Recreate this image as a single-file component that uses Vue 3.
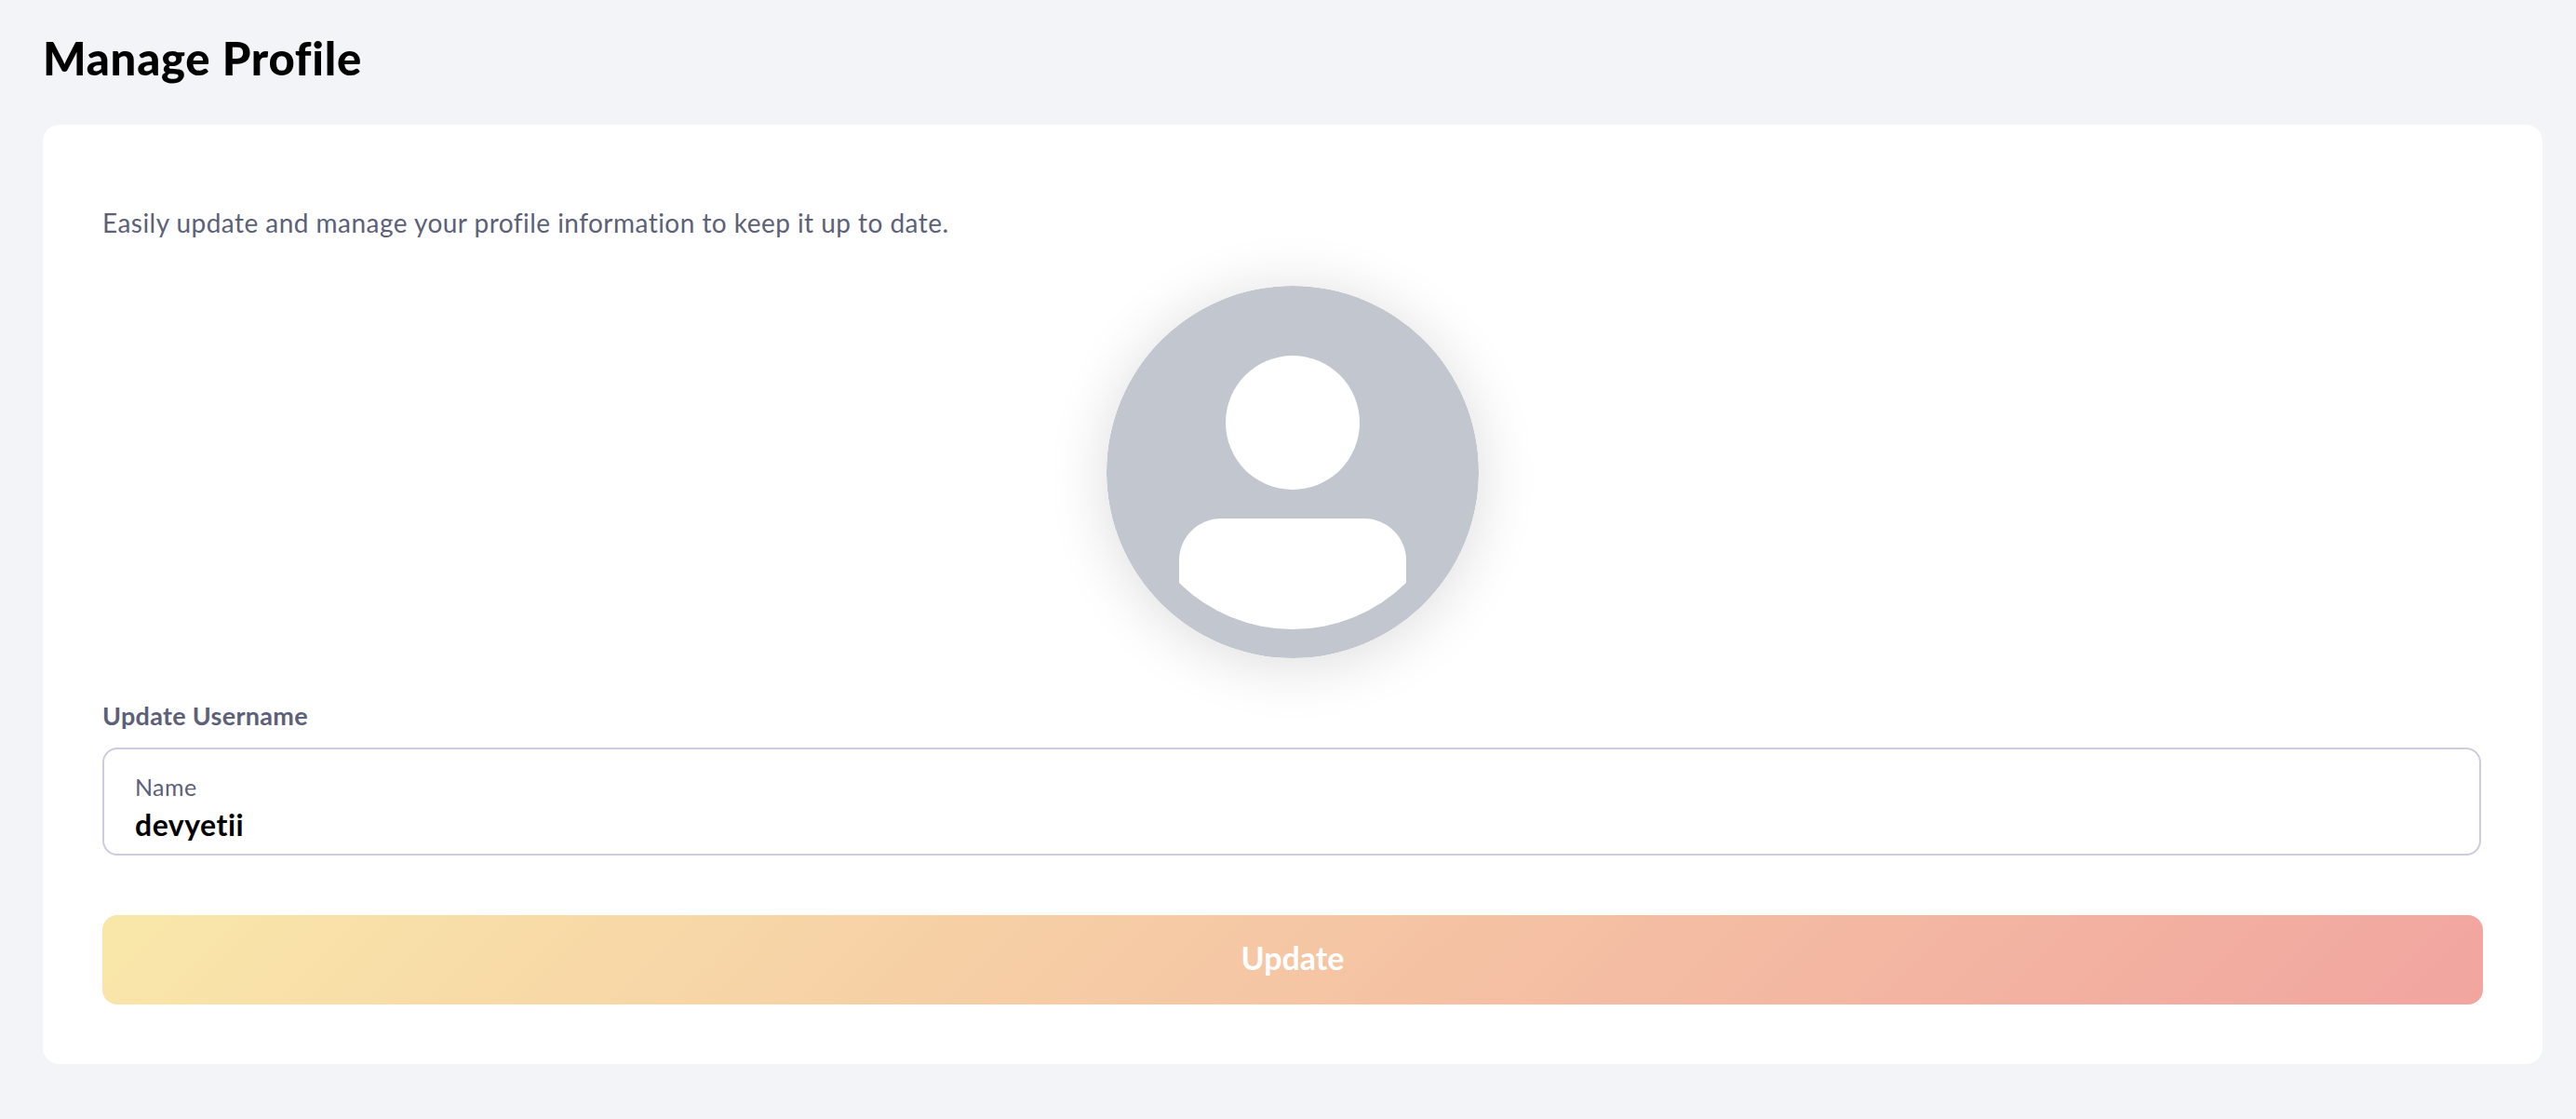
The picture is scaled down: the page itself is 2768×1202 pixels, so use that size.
<script setup>
const username = 'devyetii'
</script>

<template>
  <main class="page">
    <h1 class="title">Manage Profile</h1>
    <section class="card">
      <p class="intro">Easily update and manage your profile information to keep it up to date.</p>
      <div class="avatar-row">
        <svg class="avatar" width="400" height="400" viewBox="0 0 400 400" role="img" aria-label="Profile picture">
          <circle cx="200" cy="200" r="200" fill="#c1c6cf" />
          <circle cx="200" cy="147" r="72" fill="#fff" />
          <path d="M78 319 V295 A45 45 0 0 1 123 250 H277 A45 45 0 0 1 322 295 V319 A174 174 0 0 1 78 319 Z" fill="#fff" />
        </svg>
      </div>
      <h2 class="section-label">Update Username</h2>
      <div class="field">
        <span class="field-label">Name</span>
        <span class="field-value">{{ username }}</span>
      </div>
      <button class="submit" type="button">Update</button>
    </section>
  </main>
</template>

<style scoped>
.page {
  box-sizing: border-box;
  width: 2768px;
  height: 1202px;
  padding: 32px 36px 0 46px;
  background: #f3f4f8;
  font-family: Lato, "Noto Sans", sans-serif;
  overflow: hidden;
}
.title {
  margin: 0 0 38px;
  height: 64px;
  font-size: 49px;
  line-height: 60px;
  font-weight: 900;
  letter-spacing: 0.75px;
  color: #000;
  white-space: nowrap;
}
.card {
  box-sizing: border-box;
  height: 1009px;
  padding: 85px 64px 0;
  background: #fff;
  border-radius: 18px;
}
.intro {
  margin: 0;
  height: 40px;
  font-size: 28px;
  line-height: 40px;
  letter-spacing: 0.46px;
  color: #5c6079;
  white-space: nowrap;
}
.avatar-row {
  display: flex;
  justify-content: center;
  margin-top: 48px;
}
.avatar {
  display: block;
  border-radius: 50%;
  box-shadow: 0 6px 66px rgba(0, 0, 0, 0.14);
}
.section-label {
  margin: 44px 0 0;
  height: 36px;
  font-size: 27px;
  line-height: 36px;
  font-weight: 700;
  letter-spacing: 0.3px;
  color: #5c6079;
}
.field {
  box-sizing: border-box;
  display: flex;
  flex-direction: column;
  height: 116px;
  margin: 16px 2px 0 0;
  padding: 24px 33px 0;
  border: 2px solid #cdcbde;
  border-radius: 16px;
}
.field-label {
  font-size: 25px;
  line-height: 32px;
  letter-spacing: 0.4px;
  color: #5c6079;
}
.field-value {
  margin-top: 5px;
  font-size: 32px;
  line-height: 40px;
  font-weight: 700;
  letter-spacing: 0.5px;
  color: #000;
}
.submit {
  display: block;
  width: 100%;
  height: 96px;
  margin-top: 64px;
  padding: 0 0 5px;
  border: 0;
  border-radius: 16px;
  background: linear-gradient(135deg, #f9e7a9 0%, #f1a59f 100%);
  font-family: inherit;
  font-size: 34px;
  font-weight: 700;
  color: #fff;
}
</style>
